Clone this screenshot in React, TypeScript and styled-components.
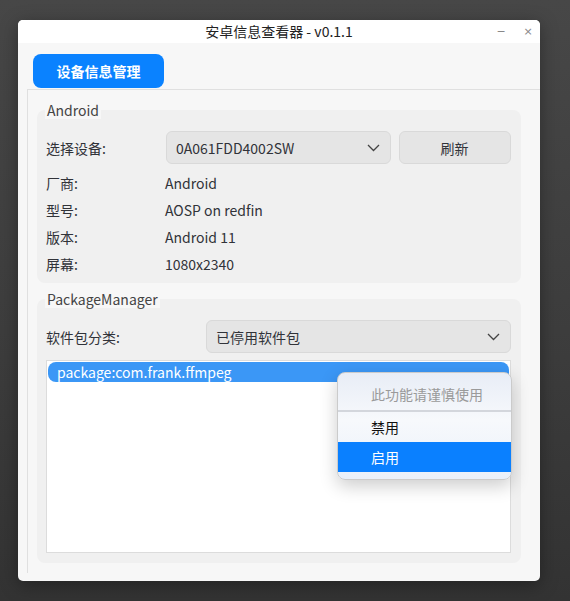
import styled, { createGlobalStyle } from "styled-components";

const GlobalStyle = createGlobalStyle`
  html, body {
    margin: 0;
    height: 100%;
  }
  body {
    background: linear-gradient(180deg, #474747 0%, #3d3d3d 55%, #333 100%);
    font-family: "Noto Sans CJK SC", "Noto Sans", sans-serif;
    color: #333;
  }
  #root {
    padding: 20px 0 0 18px;
  }
`;

const Window = styled.div`
  width: 522px;
  height: 561px;
  background: #f7f7f7;
  border-radius: 5px;
  overflow: hidden;
  display: flex;
  flex-direction: column;
  box-shadow: 0 4px 18px rgba(0, 0, 0, 0.35);
`;

const TitleBar = styled.div`
  height: 23px;
  background: #fff;
  display: grid;
  grid-template-columns: 56px 1fr 56px;
  align-items: center;
`;

const Title = styled.div`
  grid-column: 2;
  text-align: center;
  font-size: 14px;
  color: #222;
  line-height: 23px;
`;

const WinButtons = styled.div`
  display: flex;
  gap: 11px;
  padding-left: 9px;
  font-family: "DejaVu Sans", sans-serif;
  font-size: 11px;
  color: #888;

  span {
    width: 16px;
    text-align: center;
  }
`;

const Body = styled.div`
  flex: 1;
  display: flex;
  flex-direction: column;
  padding: 11px 0 8px 9px;
`;

const TabBar = styled.div`
  display: flex;
  padding-left: 6px;
`;

const Tab = styled.div`
  width: 131px;
  height: 34px;
  border-radius: 8px;
  background: #0a82ff;
  color: #fff;
  font-size: 14px;
  font-weight: 700;
  display: flex;
  align-items: center;
  justify-content: center;
`;

const Pane = styled.div`
  flex: 1;
  margin-top: 1px;
  border-left: 1px solid #e0e0e0;
  border-top: 1px solid #e0e0e0;
  padding: 11px 19px 0 9px;
  display: flex;
  flex-direction: column;
  gap: 7px;
`;

const Group = styled.div`
  display: flex;
  flex-direction: column;
`;

const Legend = styled.span`
  align-self: flex-start;
  position: relative;
  z-index: 1;
  margin: 0 0 -9px 8px;
  padding: 0 2px;
  background: #f7f7f7;
  font-size: 14px;
  line-height: 18px;
  color: #444;
`;

const Box = styled.div<{ $bottom: number }>`
  background: #f0f0f0;
  border-radius: 8px;
  padding: 21px 10px ${({ $bottom }) => $bottom}px 9px;
  display: flex;
  flex-direction: column;
`;

const FieldRow = styled.div<{ $cols: string; $h: number }>`
  display: grid;
  grid-template-columns: ${({ $cols }) => $cols};
  column-gap: 8px;
  align-items: center;
  height: ${({ $h }) => $h}px;
  font-size: 14px;
  color: #313339;
`;

const InfoList = styled.div`
  margin-top: 5px;
  display: flex;
  flex-direction: column;
`;

const Combo = styled.div`
  height: 33px;
  box-sizing: border-box;
  background: #e5e5e5;
  border: 1px solid #d9d9d9;
  border-radius: 6px;
  padding: 0 10px 0 9px;
  display: flex;
  align-items: center;
  justify-content: space-between;
  font-size: 14px;
  color: #313339;
`;

const Button = styled(Combo)`
  justify-content: center;
`;

const PackageList = styled.div`
  position: relative;
  margin-top: 7px;
  height: 193px;
  box-sizing: border-box;
  background: #fff;
  border: 1px solid #dcdcdc;
  padding: 1px;
`;

const Item = styled.div<{ $selected?: boolean }>`
  height: 20px;
  line-height: 20px;
  border-radius: 8px;
  padding-left: 9px;
  font-size: 14px;
  background: ${({ $selected }) => ($selected ? "#3b97f6" : "transparent")};
  color: ${({ $selected }) => ($selected ? "#fff" : "#333")};
`;

const Menu = styled.div`
  position: absolute;
  left: 290px;
  top: 11px;
  width: 173px;
  padding-bottom: 7px;
  border: 1px solid #cbcbcb;
  border-radius: 8px;
  overflow: hidden;
  background: linear-gradient(180deg, #e8edf6 0%, #f7f9fc 45%, #e9f0fa 100%);
  box-shadow: 0 6px 18px rgba(0, 0, 0, 0.2);
`;

const MenuHeader = styled.div`
  height: 37px;
  box-sizing: border-box;
  padding: 4px 0 0 33px;
  display: flex;
  align-items: center;
  font-size: 14px;
  color: #9a9a9a;
`;

const Separator = styled.div`
  height: 2px;
  background: #d3d6dc;
`;

const MenuItem = styled.div<{ $active?: boolean }>`
  height: 30px;
  line-height: 30px;
  padding-left: 33px;
  font-size: 14px;
  background: ${({ $active }) => ($active ? "#0a80ff" : "transparent")};
  color: ${({ $active }) => ($active ? "#fff" : "#111")};
`;

const Chevron = () => (
  <svg width="13" height="8" viewBox="0 0 13 8" fill="none">
    <polyline points="1,1 6.5,6.5 12,1" stroke="#444" strokeWidth="1.3" />
  </svg>
);

const info = [
  ["厂商:", "Android"],
  ["型号:", "AOSP on redfin"],
  ["版本:", "Android 11"],
  ["屏幕:", "1080x2340"],
];

export default function App() {
  return (
    <>
      <GlobalStyle />
      <Window>
        <TitleBar>
          <Title>安卓信息查看器 - v0.1.1</Title>
          <WinButtons>
            <span>−</span>
            <span>×</span>
          </WinButtons>
        </TitleBar>
        <Body>
          <TabBar>
            <Tab>设备信息管理</Tab>
          </TabBar>
          <Pane>
            <Group>
              <Legend>Android</Legend>
              <Box $bottom={6}>
                <FieldRow $cols="112px 225px 112px" $h={33}>
                  <span>选择设备:</span>
                  <Combo>
                    0A061FDD4002SW
                    <Chevron />
                  </Combo>
                  <Button>刷新</Button>
                </FieldRow>
                <InfoList>
                  {info.map(([k, v]) => (
                    <FieldRow key={k} $cols="111px 1fr" $h={27}>
                      <span>{k}</span>
                      <span>{v}</span>
                    </FieldRow>
                  ))}
                </InfoList>
              </Box>
            </Group>
            <Group>
              <Legend>PackageManager</Legend>
              <Box $bottom={10}>
                <FieldRow $cols="152px 1fr" $h={33}>
                  <span>软件包分类:</span>
                  <Combo>
                    已停用软件包
                    <Chevron />
                  </Combo>
                </FieldRow>
                <PackageList>
                  <Item $selected>package:com.frank.ffmpeg</Item>
                  <Menu>
                    <MenuHeader>此功能请谨慎使用</MenuHeader>
                    <Separator />
                    <MenuItem>禁用</MenuItem>
                    <MenuItem $active>启用</MenuItem>
                  </Menu>
                </PackageList>
              </Box>
            </Group>
          </Pane>
        </Body>
      </Window>
    </>
  );
}
